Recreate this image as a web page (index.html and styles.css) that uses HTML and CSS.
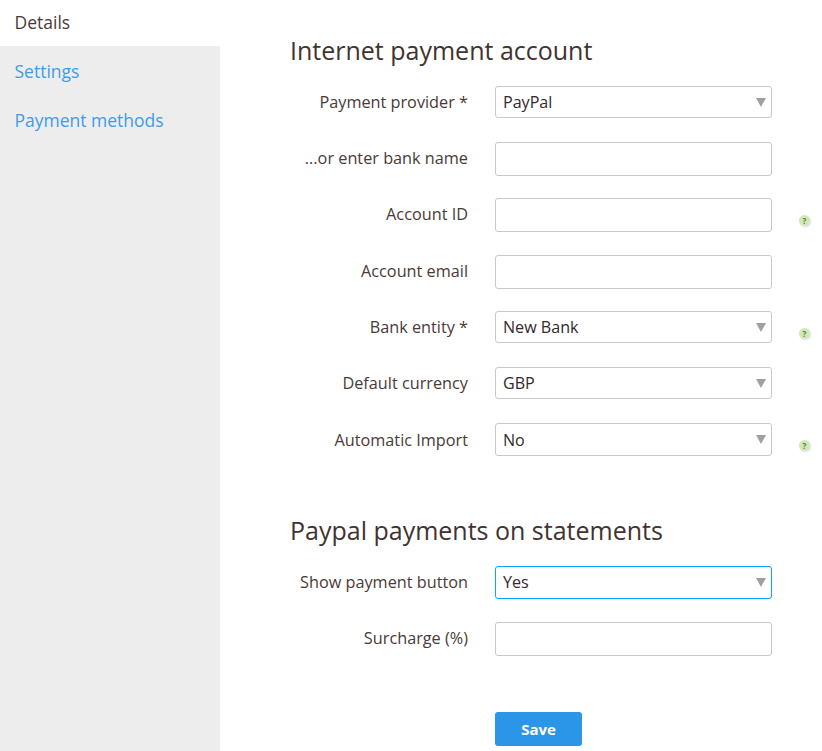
FILE: index.html
```
<!DOCTYPE html>
<html lang="en">
<head>
<meta charset="utf-8">
<title>Internet payment account</title>
<link rel="stylesheet" href="styles.css">
</head>
<body>
<div class="page">
  <nav class="sidebar">
    <div class="tab tab-active">Details</div>
    <div class="tabs-rest">
      <a class="tab">Settings</a>
      <a class="tab">Payment methods</a>
    </div>
  </nav>
  <main class="main">
    <h2 class="heading">Internet payment account</h2>
    <div class="rows">
      <div class="row"><label class="label">Payment provider *</label><div class="field select">PayPal<span class="arrow"></span></div></div>
      <div class="row"><label class="label">...or enter bank name</label><div class="field input"></div></div>
      <div class="row"><label class="label">Account ID</label><div class="field input"></div><span class="help">?</span></div>
      <div class="row"><label class="label">Account email</label><div class="field input"></div></div>
      <div class="row"><label class="label">Bank entity *</label><div class="field select">New Bank<span class="arrow"></span></div><span class="help">?</span></div>
      <div class="row"><label class="label">Default currency</label><div class="field select">GBP<span class="arrow"></span></div></div>
      <div class="row row-tall"><label class="label">Automatic Import</label><div class="field select">No<span class="arrow"></span></div><span class="help">?</span></div>
    </div>
    <h2 class="heading heading-second">Paypal payments on statements</h2>
    <div class="rows">
      <div class="row"><label class="label">Show payment button</label><div class="field select focused">Yes<span class="arrow"></span></div></div>
      <div class="row"><label class="label">Surcharge (%)</label><div class="field input"></div></div>
    </div>
    <div class="actions"><button class="save" type="button">Save</button></div>
  </main>
</div>
</body>
</html>
```
FILE: styles.css
```
* { box-sizing: border-box; }
html, body { margin: 0; height: 100%; overflow: hidden; background: #fff; }
body { font-family: "Open Sans", "Liberation Sans", sans-serif; color: #4a3a36; font-size: 16px; }
.page { display: flex; height: 751px; }
.sidebar { width: 220px; flex: none; display: flex; flex-direction: column; }
.tab { display: block; height: 49px; padding: 10px 0 0 14.5px; font-size: 17.5px; line-height: 24px; color: #3f9be8; }
.tab-active { height: 46px; color: #4a3a36; background: #fff; }
.tabs-rest { flex: 1; background: #ededed; }
.tabs-rest .tab { padding-top: 13px; }
.main { flex: 1; padding: 34px 0 0 70px; }
.heading { margin: 0 0 19px; font-size: 25px; font-weight: 400; line-height: 33px; color: #41332f; }
.heading-second { margin: 35px 0 18.5px; }
.rows { display: flex; flex-direction: column; }
.row { display: flex; align-items: flex-start; height: 56.2px; }
.label { width: 178px; flex: none; text-align: right; font-size: 16.25px; line-height: 32px; }
.field { width: 277px; margin-left: 27px; flex: none; border: 1px solid #c8c8c8; border-radius: 3px; background: #fff; color: #33282a; }
.input { height: 34px; }
.select { position: relative; height: 32px; padding-left: 7px; line-height: 30px; font-size: 16.1px; }
.focused { border-color: #00a8ff; height: 33px; }
.row-tall .select { height: 33px; line-height: 32px; }
.row-tall .label { line-height: 34px; }
.arrow { position: absolute; right: 5px; top: 11px; width: 0; height: 0; border-left: 5px solid transparent; border-right: 5px solid transparent; border-top: 9px solid #a0a0a0; }
.help { width: 11px; height: 11px; margin: 17px 0 0 27px; flex: none; border-radius: 50%; background: #d3e8b8; box-shadow: 1px 1px 2px rgba(0,0,0,.12); color: #5f7a40; font-size: 8px; font-weight: 700; line-height: 11px; text-align: center; }
.actions { padding: 33.6px 0 0 205px; }
.save { display: block; width: 87px; height: 34px; padding: 0; border: 0; border-radius: 3px; background: #2b96e8; color: #fff; font-family: inherit; font-size: 15px; font-weight: 700; }
```
